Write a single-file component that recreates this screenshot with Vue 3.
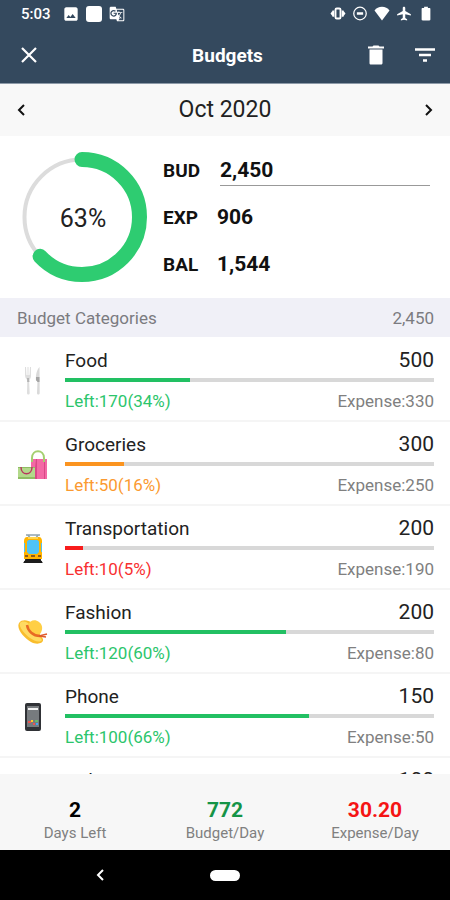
<template>
  <div class="budget-page">
    <!-- Status bar -->
    <div class="status-bar">
      <span class="status-time">5:03</span>
      <svg class="status-icon" viewBox="0 0 24 24">
        <path fill="#fff" d="M22 19V5c0-1.500-1-3-3-3H5C3 2 2 3.500 2 5v14c0 2 1 3 3 3h14c2 0 3-1 3-3zM8.500 13.500l2.500 3 3.500-4.500 4.500 6H5l3.500-4.500z" />
      </svg>
      <span class="status-square"></span>
      <svg class="status-icon" viewBox="0 0 24 24">
        <path fill="#fff" d="M21 4H11l-1-3H3c-1.100 0-2 .9-2 2v15c0 1.100.9 2 2 2h8l1 3h9c1.100 0 2-.9 2-2V6c0-1.100-.9-2-2-2zM7 16c-2.760 0-5-2.240-5-5s2.240-5 5-5c1.350 0 2.480.5 3.350 1.300L9.030 8.570c-.38-.36-1.040-.78-2.030-.78-1.740 0-3.150 1.440-3.150 3.210S5.260 14.210 7 14.210c2.010 0 2.840-1.440 2.920-2.410H7v-1.710h4.680c.07.31.12.61.12 1.020C11.800 13.970 9.890 16 7 16zm6.170-5.420h3.700c-.43 1.250-1.110 2.430-2.050 3.470-.31-.35-.6-.72-.86-1.100l-.79-2.370zm8.330 9.920c0 .55-.45 1-1 1H14l2-2.500-1.040-3.100 3.100 3.100.92-.92-3.300-3.250.02-.02c1.130-1.250 1.930-2.690 2.400-4.220H20v-1.300h-4.530V8h-1.290v1.290h-1.440L11.460 5.500h9.040c.55 0 1 .45 1 1v14z" />
      </svg>
      <span class="spacer"></span>
      <div class="status-right">
        <svg class="status-icon" viewBox="0 0 24 24">
          <path fill="#fff" d="M0 12l3-4v8zM24 12l-3-4v8zM3 7h3v10H3zM18 7h3v10h-3z" />
          <rect x="8" y="4" width="8" height="16" rx="2" fill="none" stroke="#fff" stroke-width="3" />
        </svg>
        <svg class="status-icon" viewBox="0 0 24 24">
          <circle cx="12" cy="12" r="10" fill="none" stroke="#fff" stroke-width="2" />
          <path stroke="#fff" stroke-width="4" d="M7 12h10" />
        </svg>
        <svg class="status-icon" viewBox="0 0 24 24">
          <path fill="#fff" d="M12 23L0 7c3-4 7-6 12-6s9 2 12 6z" />
        </svg>
        <svg class="status-icon" viewBox="0 0 24 24">
          <path fill="#fff" d="M23 15v-2l-9-5V3c0-1.100-.9-2-2-2s-2 .9-2 2v5l-9 5v2l9-2v6l-3 2v2l5-1 5 1v-2l-3-2v-6z" />
        </svg>
        <svg class="status-icon" viewBox="0 0 24 24">
          <path fill="#fff" d="M17.500 3H15V1H9v2H6.500C5.700 3 5 3.700 5 4.500v17c0 .8.7 1.500 1.500 1.500h11c.8 0 1.500-.7 1.500-1.500v-17c0-.8-.7-1.500-1.500-1.500z" />
        </svg>
      </div>
    </div>

    <!-- App bar -->
    <header class="app-bar">
      <div class="bar-side">
        <button class="icon-btn" aria-label="Close">
          <svg width="18" height="18" viewBox="0 0 18 18">
            <path d="M2 2l14 14M16 2L2 16" stroke="#fff" stroke-width="2.200" />
          </svg>
        </button>
      </div>
      <h1 class="bar-title">Budgets</h1>
      <div class="bar-side right">
        <button class="icon-btn" aria-label="Delete">
          <svg width="16" height="20" viewBox="0 0 16 20">
            <path fill="#fff" d="M0 1.500h4.500L5.500.5h5l1 1H16v2H0zM1.500 4.500h13V18c0 1-.8 1.500-1.500 1.500H3c-1 0-1.500-.5-1.500-1.500z" />
          </svg>
        </button>
        <button class="icon-btn" aria-label="Filter">
          <svg width="20" height="16" viewBox="0 0 20 16">
            <path stroke="#fff" stroke-width="2.500" d="M0 2.500h20M4 8h12M8 13.500h4" />
          </svg>
        </button>
      </div>
    </header>

    <!-- Month switcher -->
    <div class="month-bar">
      <button class="icon-btn" aria-label="Previous month" @click="changeMonth(-1)">
        <svg width="10" height="14" viewBox="0 0 10 14">
          <path d="M8 2L3 7l5 5" fill="none" stroke="#111" stroke-width="2" />
        </svg>
      </button>
      <span class="month-label">{{ monthLabel }}</span>
      <button class="icon-btn" aria-label="Next month" @click="changeMonth(1)">
        <svg width="10" height="14" viewBox="0 0 10 14">
          <path d="M2 2l5 5-5 5" fill="none" stroke="#111" stroke-width="2" />
        </svg>
      </button>
    </div>

    <!-- Summary -->
    <section class="summary">
      <svg class="ring" viewBox="0 0 130 130">
        <circle cx="65" cy="65" r="57.500" fill="none" stroke="#dcdcdc" stroke-width="4" />
        <circle
          cx="65" cy="65" r="57.500" fill="none" stroke="#2ecc71" stroke-width="15"
          stroke-linecap="round" pathLength="100" :stroke-dasharray="`${percent} 100`"
          transform="rotate(-90 65 65)"
        />
        <text x="66" y="75" text-anchor="middle" class="ring-text">{{ percent }}%</text>
      </svg>
      <div class="totals">
        <div class="total-row">
          <label class="total-label" for="budget">BUD</label>
          <input id="budget" v-model="budget" class="budget-input" type="text" />
        </div>
        <div class="total-row">
          <span class="total-label">EXP</span>
          <span class="total-value">906</span>
        </div>
        <div class="total-row">
          <span class="total-label">BAL</span>
          <span class="total-value">1,544</span>
        </div>
      </div>
    </section>

    <div class="section-head">
      <span>Budget Categories</span>
      <span>{{ budget }}</span>
    </div>

    <!-- Category list -->
    <ul class="category-list">
      <li v-for="item in categories" :key="item.name" class="category">
        <svg v-if="item.icon === 'food'" class="category-icon" viewBox="0 0 32 32">
          <path fill="#dedede" d="M8 2h1l.5 8h1V2h1v8h1L13 2h1v9c0 2-1 3-2 4l.7 13c0 2-2.700 2-2.700 0l.3-13C9 14 8 12 8 10z" />
          <path fill="#b5b5b5" d="M10 13h2l.5 4h-2.300z" />
          <path fill="#d9d9d9" d="M22.500 2c-3 3-4 9-3.500 14h1.500L20 28c0 2 2.700 2 2.700 0z" />
          <path fill="#a5a5a5" d="M19 12h3.500v5h-2L19 15z" />
        </svg>
        <svg v-else-if="item.icon === 'groceries'" class="category-icon" viewBox="0 0 32 32">
          <path fill="#f368a5" d="M14 10h16v20H14z" />
          <path fill="#d84886" d="M19 10h1v20h-3zM27 10h1v20h-1z" />
          <path fill="none" stroke="#a5cf70" stroke-width="2" d="M15 13V9c0-9 12-9 12 0v4" />
          <path fill="#b3d98a" d="M1 18h17v12H1z" />
          <path fill="#8fbd63" d="M1 28h17v2H1zM1 18h17v1H1z" />
          <path fill="none" stroke="#b8385e" stroke-width="1.500" d="M4 18c0 9 11 9 11 0" />
        </svg>
        <svg v-else-if="item.icon === 'train'" class="category-icon" viewBox="0 0 32 32">
          <path fill="none" stroke="#90a4ae" stroke-width="1.500" d="M9 2h14M11 2l2 3M21 2l-2 3" />
          <path fill="#424242" d="M9 26h14l3 4H6z" />
          <path fill="#ffb300" d="M10 4h12c2 0 3 2 3 4v18H7V8c0-2 1-4 3-4z" />
          <path fill="#ffd54f" d="M11 4h10v2H11z" />
          <path fill="#4fc3f7" d="M12 7h8c1 0 2 1 2 2v10l-2 2h-8l-2-2V9c0-1 1-2 2-2zM7 10h1v9H7zM24 10h1v9h-1z" />
          <path fill="#8d5a1b" d="M8 22h3v2H8zM21 22h3v2h-3zM14 22h4v2h-4z" />
          <path stroke="#111" stroke-width="1.500" d="M8 27h16M7 29h18" />
        </svg>
        <svg v-else-if="item.icon === 'hat'" class="category-icon" viewBox="0 0 32 32">
          <path fill="#f9bd2c" d="M2 6c3-4 9-3 13 0l11 16c1 5-7 6-12 3C7 21-1 12 2 6z" />
          <path fill="#ffda62" d="M3 6c3-3 8-1 11 3l11 14c-2 3-8 1-12-2S1 10 3 6z" />
          <path fill="#ffcf45" d="M11 8c2-5 7-6 11-3s4 8 1 12c-3 3-9 0-12-9z" />
          <path fill="none" stroke="#e86a24" stroke-width="2.500" d="M10 8c1 6 6 11 13 11" />
          <path fill="none" stroke="#e05a2b" stroke-width="1.500" d="M22 19l8-2M22 19l7 1" />
        </svg>
        <svg v-else-if="item.icon === 'phone'" class="category-icon" viewBox="0 0 32 32">
          <rect x="8" y="2" width="16" height="28" rx="2" fill="#303236" />
          <path fill="#777b7e" d="M10 5h12v21H10z" />
          <path fill="#f2f2f2" d="M11 7h10v2H11z" />
          <path fill="#ef5350" d="M11 20h3v2h-3zM16 22h2v2h-2z" />
          <path fill="#ffca28" d="M14 19h2v2h-2z" />
          <path fill="#66bb6a" d="M18 19h3v2h-3z" />
          <path fill="#42a5f5" d="M19 22h2v2h-2z" />
        </svg>
        <span v-else class="category-icon"></span>

        <div class="category-body">
          <div class="category-line">
            <span class="category-name">{{ item.name }}</span>
            <span class="category-amount">{{ item.amount }}</span>
          </div>
          <div class="track">
            <div :class="['fill', item.level]" :style="{ width: item.percent + '%' }"></div>
          </div>
          <div class="category-line small">
            <span :class="['left', item.level]">Left:{{ item.left }}({{ item.percent }}%)</span>
            <span class="expense">Expense:{{ item.amount - item.left }}</span>
          </div>
        </div>
      </li>
    </ul>

    <!-- Daily stats -->
    <footer class="stats">
      <div v-for="stat in stats" :key="stat.label" class="stat">
        <span :class="['stat-value', stat.tone]">{{ stat.value }}</span>
        <span class="stat-label">{{ stat.label }}</span>
      </div>
    </footer>

    <!-- System navigation -->
    <nav class="nav-bar">
      <button class="nav-btn" aria-label="Back">
        <svg width="8" height="12" viewBox="0 0 8 12">
          <path d="M7 1L2 6l5 5" fill="none" stroke="#fff" stroke-width="2" />
        </svg>
      </button>
      <button class="nav-btn" aria-label="Home">
        <span class="home-pill"></span>
      </button>
      <span></span>
    </nav>
  </div>
</template>

<script setup>
import { ref, computed } from 'vue'

const budget = ref('2,450')
const percent = ref(63)
const month = ref(new Date(2020, 9, 1))

const monthLabel = computed(() =>
  month.value.toLocaleDateString('en-US', { month: 'short', year: 'numeric' })
)

const changeMonth = (step) => {
  const d = month.value
  month.value = new Date(d.getFullYear(), d.getMonth() + step, 1)
}

const categories = [
  { name: 'Food', icon: 'food', amount: 500, left: 170, percent: 34, level: 'good' },
  { name: 'Groceries', icon: 'groceries', amount: 300, left: 50, percent: 16, level: 'warn' },
  { name: 'Transportation', icon: 'train', amount: 200, left: 10, percent: 5, level: 'bad' },
  { name: 'Fashion', icon: 'hat', amount: 200, left: 120, percent: 60, level: 'good' },
  { name: 'Phone', icon: 'phone', amount: 150, left: 100, percent: 66, level: 'good' },
  { name: 'Utilities', icon: '', amount: 100, left: 50, percent: 50, level: 'good' }
]

const stats = [
  { label: 'Days Left', value: '2', tone: '' },
  { label: 'Budget/Day', value: '772', tone: 'green' },
  { label: 'Expense/Day', value: '30.20', tone: 'red' }
]
</script>

<style>
body {
  margin: 0;
}
</style>

<style scoped>
.budget-page {
  display: flex;
  flex-direction: column;
  height: 100vh;
  background: #fff;
  color: #222;
  font-family: Roboto, 'Liberation Sans', sans-serif;
}

button {
  padding: 0;
  background: none;
  border: none;
  cursor: pointer;
}

/* Status bar */
.status-bar {
  display: flex;
  align-items: center;
  gap: 7px;
  height: 27px;
  padding: 0 16px 0 21px;
  background: #34495e;
  color: #fff;
}

.status-time {
  margin-right: 5px;
  font-size: 15px;
  font-weight: 500;
}

.status-icon {
  width: 16px;
  height: 16px;
}

.status-square {
  width: 16px;
  height: 16px;
  background: #fff;
  border-radius: 3px;
}

.spacer {
  flex: 1;
}

.status-right {
  display: flex;
  gap: 6px;
}

.status-right .status-icon {
  height: 15px;
}

/* App bar */
.app-bar {
  display: flex;
  align-items: center;
  height: 56px;
  padding: 0 15px 0 20px;
  background: #34495e;
  border-bottom: 1px solid #8d9aa8;
}

.bar-side {
  display: flex;
  flex: 1;
}

.bar-side.right {
  justify-content: flex-end;
  gap: 31px;
}

.bar-title {
  margin: 0;
  color: #fff;
  font-size: 19px;
  font-weight: 700;
}

.icon-btn {
  display: flex;
  align-items: center;
}

/* Month switcher */
.month-bar {
  display: flex;
  align-items: center;
  justify-content: space-between;
  height: 52px;
  padding: 0 16px;
  background: #f8f8f8;
}

.month-label {
  font-size: 23px;
  line-height: 28px;
}

/* Summary */
.summary {
  display: flex;
  align-items: center;
  gap: 16px;
  height: 162px;
  padding: 0 20px 0 17px;
}

.ring {
  flex-shrink: 0;
  width: 130px;
  height: 130px;
}

.ring-text {
  fill: #222;
  font-size: 25px;
}

.totals {
  flex: 1;
  min-width: 0;
}

.total-row {
  display: flex;
  align-items: center;
  height: 47px;
  color: #111;
  font-size: 21px;
  font-weight: 700;
}

.total-label {
  width: 54px;
  font-size: 19px;
}

.budget-input {
  flex: 1;
  min-width: 0;
  height: 30px;
  margin-left: 3px;
  padding: 0;
  background: none;
  border: none;
  border-bottom: 1px solid #999;
  outline: none;
  color: inherit;
  font: inherit;
}

/* Section header */
.section-head {
  display: flex;
  align-items: center;
  justify-content: space-between;
  height: 39px;
  padding: 0 16px 0 17px;
  background: #f0f0f7;
  color: #7b7b80;
  font-size: 17px;
}

/* Category list */
.category-list {
  flex: 1;
  min-height: 0;
  margin: 0;
  padding: 1px 0 0;
  overflow: hidden;
  list-style: none;
}

.category {
  display: flex;
  align-items: center;
  gap: 16px;
  box-sizing: border-box;
  height: 84px;
  padding: 4px 16px 0 17px;
  border-bottom: 2px solid #f5f5f5;
}

.category-icon {
  flex-shrink: 0;
  width: 32px;
  height: 32px;
}

.category-body {
  flex: 1;
}

.category-line {
  display: flex;
  align-items: center;
  justify-content: space-between;
  height: 36px;
}

.category-line.small {
  height: 38px;
  font-size: 17px;
}

.category-name {
  font-size: 19px;
}

.category-amount {
  font-size: 21px;
}

.track {
  height: 4px;
  background: #d8d8d8;
}

.fill {
  height: 4px;
}

.fill.good {
  background: #22c063;
}

.fill.warn {
  background: #fb9420;
}

.fill.bad {
  background: #f81c1c;
}

.left.good {
  color: #2cc56c;
}

.left.warn {
  color: #fb9a30;
}

.left.bad {
  color: #f83030;
}

.expense {
  color: #808080;
}

/* Daily stats */
.stats {
  display: flex;
  height: 76px;
  background: #f7f7f7;
}

.stat {
  display: flex;
  flex: 1;
  flex-direction: column;
  align-items: center;
  justify-content: center;
  padding-top: 16px;
}

.stat-value {
  color: #000;
  font-size: 21px;
  font-weight: 700;
  line-height: 26px;
}

.stat-value.green {
  color: #159447;
}

.stat-value.red {
  color: #f51414;
}

.stat-label {
  color: #808080;
  font-size: 15px;
  line-height: 20px;
}

/* System navigation */
.nav-bar {
  display: grid;
  grid-template-columns: 1fr 52px 1fr;
  align-items: center;
  height: 50px;
  background: #000;
}

.nav-btn {
  display: flex;
  justify-content: center;
}

.home-pill {
  width: 30px;
  height: 11px;
  background: #fff;
  border-radius: 6px;
}
</style>
